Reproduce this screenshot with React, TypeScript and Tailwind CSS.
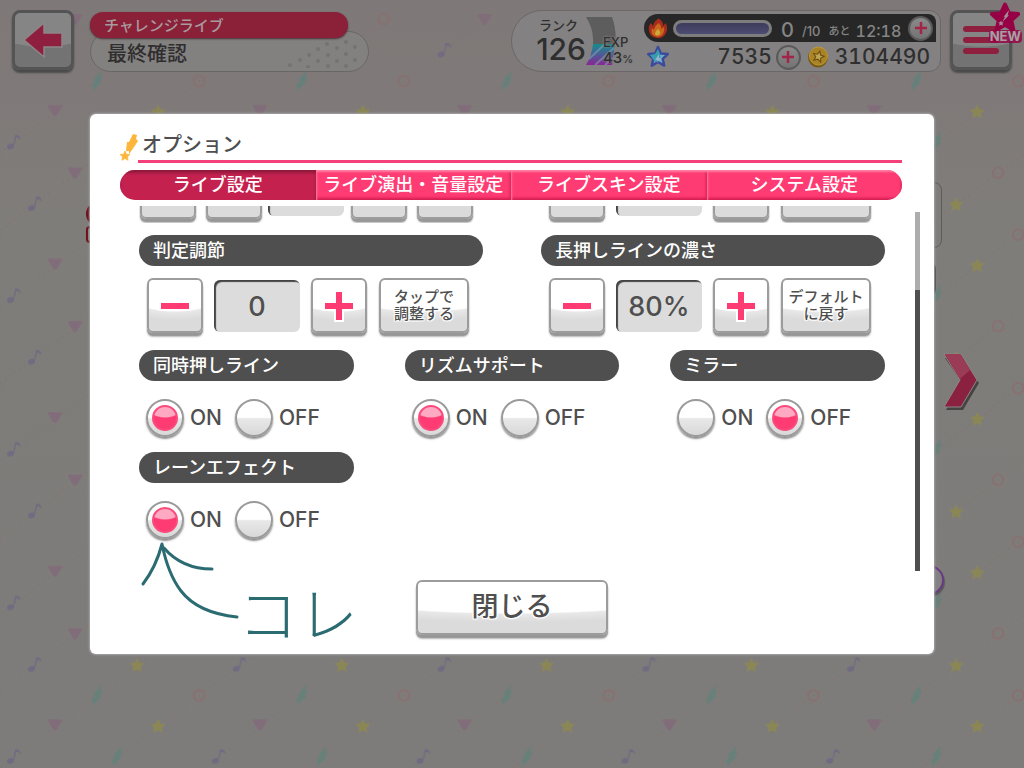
import { useState } from 'react';
import type { ReactNode } from 'react';
import { clsx } from 'clsx';

const STAR = 'M0-10 2.9-3.6 9.8-3 4.7 1.8 6.2 8.6 0 5-6.2 8.6-4.7 1.8-9.8-3-2.9-3.6Z';

const tabs = ['ライブ設定', 'ライブ演出・音量設定', 'ライブスキン設定', 'システム設定'];

/* Party wallpaper behind everything */
const Wallpaper = () => (
  <svg className="absolute inset-0 -z-10 h-full w-full opacity-80" aria-hidden="true">
    <defs>
      <g id="wp-star"><path d={STAR} transform="scale(.76)" fill="#8f8a4c" /></g>
      <g id="wp-tri"><path d="M-6-5H6Q8-5 6.500-2.500L2 5Q0 7-2 5L-6.500-2.500Q-8-5-6-5Z" fill="#826a7b" /></g>
      <g id="wp-ring"><circle r="5.300" fill="none" stroke="#896f6f" strokeWidth="2" /></g>
      <g id="wp-bolt"><path d="M4-9-3-1H-1L-5 5H-3L-4 9 4 1H2L5-4H3Z" fill="#62817b" stroke="#62817b" /></g>
      <g id="wp-note" fill="#6f6883">
        <ellipse cx="-3.500" cy="4.500" rx="3.600" ry="2.800" transform="rotate(-20 -3.500 4.500)" />
        <path d="M-1 4 1-7Q6-8 7-2 4-5 2-4L0 4Z" />
      </g>
      <pattern id="wp" width="204.8" height="153.6" patternUnits="userSpaceOnUse">
        <g stroke="#857471" strokeWidth="1.500" strokeDasharray="2 4">
          <path d="M0 153.600 204.800 0M0 76.800 102.400 0M102.400 153.600 204.800 76.800" />
        </g>
        <use href="#wp-tri" x="75" y="19" />
        <use href="#wp-ring" x="179" y="19" />
        <use href="#wp-note" x="35" y="50" />
        <use href="#wp-star" x="137" y="51" />
        <use href="#wp-bolt" x="97" y="81" />
        <use href="#wp-ring" x="199" y="81" />
        <use href="#wp-ring" x="-5.800" y="81" />
        <use href="#wp-tri" x="55" y="110" />
        <use href="#wp-star" x="158" y="112" />
        <use href="#wp-note" x="14" y="142" />
        <use href="#wp-bolt" x="117" y="142" />
      </pattern>
    </defs>
    <rect width="100%" height="100%" fill="url(#wp)" />
  </svg>
);

const DimButton = ({ label, children }: { label: string; children: ReactNode }) => (
  <button
    aria-label={label}
    className="relative flex h-[60px] w-[62px] shrink-0 items-center justify-center rounded-lg border-[3px] border-[#545454] bg-[radial-gradient(ellipse_120%_63%_at_50%_0%,#858585_98%,#737373_100%)] shadow-[0_3px_2px_#4a4a4a]"
  >
    {children}
  </button>
);

const AddButton = ({ label }: { label: string }) => (
  <button
    aria-label={label}
    className="flex size-[25px] shrink-0 items-center justify-center rounded-full border-2 border-[#5a5a5a] bg-linear-to-b from-[#8a8a8a] to-[#747474]"
  >
    <svg viewBox="0 0 14 14" className="size-[14px]"><path d="M7 1V13M1 7H13" stroke="#a32449" strokeWidth="2.500" /></svg>
  </button>
);

const Header = () => (
  <header className="flex items-start pt-[10px] pr-3 pl-3">
    <DimButton label="戻る">
      <svg viewBox="0 0 42 38" className="h-[38px] w-[42px]">
        <path d="M2 19 22 2V12H40V26H22V36Z" fill="#8f1f3f" stroke="#8d8688" strokeWidth="1.500" />
      </svg>
    </DimButton>
    <div className="ml-4 w-[279px] pt-[2px]">
      <p className="relative z-10 mr-[21px] flex h-[26px] items-center rounded-full bg-[#8b2039] pl-[14px] text-[15px] text-[#a99a9d] shadow-[0_1px_2px_#4a3036]">
        チャレンジライブ
      </p>
      <h1 className="-mt-[7px] flex h-[41px] items-center justify-between rounded-[21px] border border-[#6b6666] bg-[#838080] pt-[3px] pr-2 pl-4 text-[20px] text-[#2f2e2e]">
        最終確認
        <svg viewBox="0 0 74 30" className="h-[30px] w-[74px]" fill="#757272" aria-hidden="true">
          {[[4, 27], [14, 22], [22, 29], [23, 17], [32, 11], [32, 23], [41, 6], [42, 17], [42, 28], [51, 10], [51, 23], [60, 4], [60, 16], [60, 28], [69, 9], [69, 22]].map(([x, y]) => (
            <circle key={`${x}-${y}`} cx={x} cy={y} r="2" />
          ))}
        </svg>
      </h1>
    </div>

    {/* Player status */}
    <div className="ml-auto flex h-[62px] w-[430px] rounded-l-[31px] rounded-r-xl border border-[#6b6767] bg-[#838181] pt-[3px] pr-[4px] text-[#2f2f2f]">
      <div className="flex w-[74px] shrink-0 flex-col items-end">
        <span className="mt-[3px] mr-2 text-[13px] leading-4">ランク</span>
        <span className="mt-[2px] font-['Inter'] text-[30px] leading-7 font-medium">126</span>
      </div>
      <div className="relative w-[58px] shrink-0">
        <svg viewBox="0 0 30 48" className="mt-[3px] h-12 w-[30px]" aria-hidden="true">
          <defs>
            <linearGradient id="exp" x1="0" y1="0" x2="0" y2="1">
              <stop offset="0" stopColor="#168c8c" />
              <stop offset=".5" stopColor="#4b5c96" />
              <stop offset="1" stopColor="#8a2593" />
            </linearGradient>
          </defs>
          <path d="M0 0H26Q31 14 29 27H7Q8 12 0 0Z" fill="#5d5d5d" />
          <path d="M7 27H29L26 48H0Q6 38 7 27Z" fill="url(#exp)" />
          <path d="M3 42 19 27M9 48 28 31M19 48 27 41" stroke="#7fa0b5" strokeWidth="2" opacity=".6" />
        </svg>
        <div className="absolute top-5 left-[17px] font-['Inter'] font-medium [text-shadow:0_0_2px_#838181,0_0_2px_#838181]">
          <p className="text-[13px] leading-4">EXP</p>
          <p className="text-[15px] leading-4">43<span className="text-[11px]">%</span></p>
        </div>
      </div>
      <div className="min-w-0 flex-1">
        <div className="flex h-7 items-center rounded-l-[14px] rounded-tr-lg bg-[#272727] pr-[3px] pl-1 font-['Inter','Noto_Sans_CJK_JP',sans-serif] font-medium text-[#858585]">
          <svg viewBox="0 0 20 22" className="h-[22px] w-5 shrink-0" aria-hidden="true">
            <path d="M10 1Q16 5 15 9L18 6Q20 12 18 16 15 22 9 21 2 20 1 14 0 9 3 6L5 9Q6 4 11 1Z" fill="#a82c1c" />
            <path d="M11 6Q14 10 13 12L16 10Q17 16 13 19 7 21 4 17 3 14 4 11L6 13Q7 8 11 6Z" fill="#c9671c" />
            <path d="M10 12Q13 15 12 17 9 20 7 17 7 14 10 12Z" fill="#cda93a" />
          </svg>
          <div className="ml-[5px] h-[17px] w-[99px] shrink-0 rounded-full border-[3px] border-[#7d7d7d] bg-linear-to-b from-[#3d3c5c] to-[#4d4c72]" />
          <span className="mt-[3px] ml-[9px] text-[20px] leading-6">0</span>
          <span className="mt-[6px] ml-2 text-[13px] leading-5">/10</span>
          <span className="mt-[6px] ml-2 text-[11px] leading-5">あと</span>
          <span className="mt-[6px] ml-[5px] mr-auto text-[16px] leading-5 tabular-nums">12:18</span>
          <AddButton label="ライブブーストを追加" />
        </div>
        <div className="flex h-[30px] items-center pr-[6px] pl-[2px] font-['Inter'] text-[21px] font-medium tabular-nums">
          <svg viewBox="-12 -12 24 24" className="size-6 shrink-0" aria-hidden="true">
            <path d={STAR} fill="#6db3c8" stroke="#3d4a9c" strokeWidth="2.500" strokeLinejoin="round" />
            <path d="M-8-2-3-3 0-8 3 0-3 5Z" fill="#359dad" />
            <path d="M1-3-3 3H0L-1 6 3 1H1Z" fill="#9ab3cc" />
          </svg>
          <span className="ml-auto">7535</span>
          <span className="ml-1 flex"><AddButton label="スターを追加" /></span>
          <svg viewBox="0 0 22 22" className="ml-[6px] size-[22px] shrink-0" aria-hidden="true">
            <ellipse cx="11" cy="11.500" rx="10" ry="10" fill="#7b5a12" />
            <circle cx="11.500" cy="10" r="9" fill="#a98325" stroke="#b99a3a" />
            <path d={STAR} transform="translate(11.500 10.500) rotate(15) scale(.55)" fill="#c0a552" stroke="#6d4e12" strokeWidth="2" />
          </svg>
          <span className="ml-[6px]">3104490</span>
        </div>
      </div>
    </div>

    <div className="relative ml-[9px]">
      <DimButton label="メニュー">
        <svg viewBox="0 0 36 30" className="h-[30px] w-9">
          <path d="M3 4H33M3 15H33M3 26H33" stroke="#8f1f3f" strokeWidth="6" strokeLinecap="round" />
        </svg>
      </DimButton>
      <div className="pointer-events-none absolute -top-2 -right-[10px] flex flex-col items-center">
        <svg viewBox="-12 -12 24 24" className="size-8">
          <path d={STAR} fill="#960045" stroke="#960045" strokeWidth="3" strokeLinejoin="round" />
          <path d="M3-6-1-1H0L-2 3 3-2H2Z" fill="#a58c98" />
          <path d={STAR} transform="translate(-3 4) scale(.22)" fill="#a58c98" />
        </svg>
        <span className="-mt-1 rounded-sm bg-[#960045]/80 px-px font-['Inter'] text-[13px] leading-[13px] font-bold text-[#a9a0a4]">NEW</span>
      </div>
    </div>
  </header>
);

/* Song confirmation screen, mostly covered by the dialog */
const LiveConfirm = () => (
  <main className="flex items-start pr-11 pl-[86px]">
    <div className="min-w-0 flex-1 pt-[110px]">
      <div className="flex h-[66px] justify-between pr-[2px]">
        <div className="pt-5">
          <div className="h-[24px] w-6 rounded-full border-[3px] border-[#6e0d18]" />
          <div className="h-[17px] w-6 rounded-sm border-2 border-[#6e0d18]" />
        </div>
        <div className="w-1/3 rounded-lg border border-[#5d5c5a]" />
      </div>
      <div className="mt-[13px] mr-[8px] ml-auto h-9 w-1/3 rounded-lg bg-[#424242]" />
      <div className="mt-[9px] mr-[9px] ml-auto h-[255px] w-1/3 rounded-lg border-2 border-[#6c6b69]" />
      <div className="mt-[4px] ml-auto size-[30px] rounded-full border-2 border-[#6a3a86] bg-[#838181] shadow-[1px_2px_1px_#5b5959]" />
    </div>
    <button className="mt-[281px]" aria-label="次の曲">
      <svg viewBox="0 0 36 58" className="h-[58px] w-9">
        <path d="M1 5H17L35 30 19 57H2L18 30Z" fill="#464343" />
        <path d="M0 1H17L33 27 17 54H0L16 27Z" fill="#8b2140" stroke="#8b8687" />
        <path d="M1 1H16L26 17 16 26Z" fill="#9b3c56" />
      </svg>
    </button>
  </main>
);

interface GlossButtonProps {
  className?: string;
  label?: string;
  onClick?: () => void;
  children?: ReactNode;
}

const GlossButton = ({ className, label, onClick, children }: GlossButtonProps) => (
  <button
    aria-label={label}
    onClick={onClick}
    className={clsx(
      'flex shrink-0 items-center justify-center rounded-md border-2 border-[#9c9c9c] bg-[radial-gradient(ellipse_120%_63%_at_50%_0%,#fff_96%,#e8e8e8_100%,#dbdbdb_125%)] shadow-[0_3px_1px_#979797,0_4px_2px_#bbb] [text-shadow:0_0_2px_#fff,1px_1px_1px_#fff,-1px_-1px_1px_#fff,1px_-1px_1px_#fff,-1px_1px_1px_#fff]',
      className,
    )}
  >
    {children}
  </button>
);

const Sign = ({ plus = false }: { plus?: boolean }) => (
  <svg viewBox="0 0 34 34" className="size-[34px]" aria-hidden="true">
    <path d={plus ? 'M17 1V33M1 17H33' : 'M1 17H33'} stroke="#fff" strokeWidth="10" />
    <path d={plus ? 'M17 3V31M3 17H31' : 'M3 17H31'} stroke="#ff3b73" strokeWidth="6" />
  </svg>
);

const SectionTitle = ({ children }: { children: ReactNode }) => (
  <h3 className="flex h-[31px] items-center rounded-full bg-[#4f4f4f] pb-[2px] pl-[14px] text-[18px] text-white">{children}</h3>
);

interface StepperProps {
  title: string;
  initial: number;
  unit?: string;
  action: ReactNode;
}

const Stepper = ({ title, initial, unit = '', action }: StepperProps) => {
  const [value, setValue] = useState(initial);

  return (
    <section>
      <SectionTitle>{title}</SectionTitle>
      <div className="mt-[12px] flex h-[58px] items-start pl-[8px]">
        <GlossButton label={`${title}を下げる`} className="h-[55px] w-14" onClick={() => setValue(value - 1)}>
          <Sign />
        </GlossButton>
        <output className="mt-[2px] ml-[11px] flex h-[52px] w-[86px] items-center justify-center rounded-md bg-[#dcdcdc] pt-[3px] font-['Inter'] text-[27px] text-[#4f4f4f] shadow-[inset_2px_2px_1px_#444]">
          {value}{unit}
        </output>
        <GlossButton label={`${title}を上げる`} className="ml-[11px] h-[55px] w-14" onClick={() => setValue(value + 1)}>
          <Sign plus />
        </GlossButton>
        <GlossButton className="ml-[12px] h-[55px] w-[90px] pb-1 text-[15px] leading-[17px]">{action}</GlossButton>
      </div>
    </section>
  );
};

interface ToggleProps {
  name: string;
  title: string;
  initial: 'ON' | 'OFF';
}

const Toggle = ({ name, title, initial }: ToggleProps) => {
  const [value, setValue] = useState<string>(initial);

  return (
    <section>
      <SectionTitle>{title}</SectionTitle>
      <div className="mt-[18px] flex h-10 items-start gap-[13px] pl-[7px]" role="radiogroup" aria-label={title}>
        {['ON', 'OFF'].map((option) => (
          <label key={option} className="flex items-center gap-[6px] font-['Inter'] text-[21px] leading-9 font-medium text-[#4f4f4f]">
            <input
              type="radio"
              name={name}
              checked={value === option}
              onChange={() => setValue(option)}
              className="flex size-[38px] shrink-0 appearance-none items-center justify-center rounded-full border-2 border-[#9a9a9a] bg-[linear-gradient(#fff_48%,#e8e8e8_52%,#d8d8d8)] shadow-[0_2px_2px_#8c8c8c] before:size-[26px] before:rounded-full before:border-2 before:border-[#fb4a7c] before:bg-[radial-gradient(ellipse_80%_50%_at_50%_0%,#ffa9c2_90%,#ff3b73_100%)] before:opacity-0 before:content-[''] checked:before:opacity-100"
            />
            {option}
          </label>
        ))}
      </div>
    </section>
  );
};

const clippedButton = 'h-14 w-14';
const clippedValue = 'mb-[3px] h-[52px] shrink-0 rounded-md bg-[#dcdcdc] shadow-[inset_2px_2px_1px_#444]';

/* Row scrolled halfway out of view */
const ClippedRow = () => (
  <div className="grid h-[17px] grid-cols-2 content-end gap-[58px] overflow-hidden">
    <div className="flex items-end pb-1">
      <GlossButton label="大きく下げる" className={clsx(clippedButton, 'ml-px')} />
      <GlossButton label="下げる" className={clsx(clippedButton, 'ml-[10px]')} />
      <div className={clsx(clippedValue, 'ml-[6px] w-[76px]')} />
      <GlossButton label="上げる" className={clsx(clippedButton, 'ml-[7px]')} />
      <GlossButton label="大きく上げる" className={clsx(clippedButton, 'ml-[10px]')} />
    </div>
    <div className="flex items-end pb-1 pl-[8px]">
      <GlossButton label="下げる" className={clippedButton} />
      <div className={clsx(clippedValue, 'ml-[11px] w-[86px]')} />
      <GlossButton label="上げる" className={clsx(clippedButton, 'ml-[11px]')} />
      <GlossButton label="元に戻す" className="ml-[12px] h-14 w-[90px]" />
    </div>
  </div>
);

/* Hand-drawn pointer to the lane effect switch */
const Annotation = () => (
  <div className="pointer-events-none absolute top-[426px] left-[48px] flex items-end text-[#2b6b72]">
    <svg viewBox="0 0 104 86" className="h-[86px] w-[104px]" fill="none" stroke="currentColor" strokeWidth="3" strokeLinecap="round" strokeLinejoin="round">
      <path d="M5 44Q18 27 24 4 30 34 43 51 60 73 99 77" />
      <path d="M26 8Q44 29 74 29" />
    </svg>
    <span className="-mb-5 -ml-1 text-[60px] leading-[70px] font-light">コレ</span>
  </div>
);

const OptionDialog = () => {
  const [active, setActive] = useState(0);

  return (
    <div className="absolute inset-0 flex items-center px-[90px]">
      <div role="dialog" aria-labelledby="option-title" className="relative w-full rounded-md bg-white pb-[19px] text-[#4f4f4f] shadow-[0_0_2px_1px_#a5a5a5]">
        <div className="pt-4 pr-8 pl-[30px]">
          <div className="flex items-start">
            <svg viewBox="0 0 18 28" className="mt-1 h-7 w-[18px]" fill="#fdb53c" aria-hidden="true">
              <path d="M13 0 17 1 16 5 18 7 12 16 9 20 9 17 6 17 7 8 9 8Z" />
              <path d={STAR} transform="translate(5 22) scale(.5)" stroke="#fdb53c" strokeWidth="1.500" strokeLinejoin="round" />
            </svg>
            <h2 id="option-title" className="h-[33px] flex-1 border-b-[3px] border-[#f5417a] pl-1 text-[20px] leading-[28px]">
              オプション
            </h2>
          </div>
          <div role="tablist" className="mt-[7px] grid h-[30px] grid-cols-4 overflow-hidden rounded-full">
            {tabs.map((tab, i) => (
              <button
                key={tab}
                role="tab"
                aria-selected={i === active}
                onClick={() => setActive(i)}
                className={clsx(
                  'pb-1 text-[18px] leading-[26px] whitespace-nowrap text-white',
                  i === active
                    ? 'bg-[#c4214f] shadow-[inset_0_3px_3px_#8e1a3b]'
                    : 'bg-[#ff3b73] shadow-[inset_1px_2px_2px_#ff80a4,inset_-1px_-2px_3px_#d11d50]',
                )}
              >
                {tab}
              </button>
            ))}
          </div>
        </div>

        <div className="mt-[6px] flex gap-[30px] pr-[14px] pl-[49px]">
          <div className="min-w-0 flex-1 pb-[30px]">
            <ClippedRow />
            <div className="mt-[12px] grid grid-cols-2 gap-[58px]">
              <Stepper title="判定調節" initial={0} action={<>タップで<br />調整する</>} />
              <Stepper title="長押しラインの濃さ" initial={80} unit="%" action={<>デフォルト<br />に戻す</>} />
            </div>
            <div className="mt-[14px] grid grid-cols-3 gap-x-[51px] gap-y-[13px]">
              <Toggle name="simultaneous" title="同時押しライン" initial="ON" />
              <Toggle name="rhythm" title="リズムサポート" initial="ON" />
              <Toggle name="mirror" title="ミラー" initial="OFF" />
              <Toggle name="lane" title="レーンエフェクト" initial="ON" />
            </div>
          </div>
          <div className="mt-[6px] flex w-[5px] flex-col bg-[#adadad] pt-[78px]">
            <div className="flex-1 bg-[#4f4f4f]" />
          </div>
        </div>

        <GlossButton className="mx-auto mt-[9px] h-[55px] w-[192px] pb-1 text-[27px]">閉じる</GlossButton>
        <Annotation />
      </div>
    </div>
  );
};

export default function App() {
  return (
    <div className="relative isolate min-h-screen overflow-hidden bg-linear-to-b from-[#7f7878] via-[#7f7d7a] via-30% to-[#7e7c7a] font-['Noto_Sans_CJK_JP',sans-serif] font-medium">
      <Wallpaper />
      <Header />
      <LiveConfirm />
      <OptionDialog />
    </div>
  );
}
